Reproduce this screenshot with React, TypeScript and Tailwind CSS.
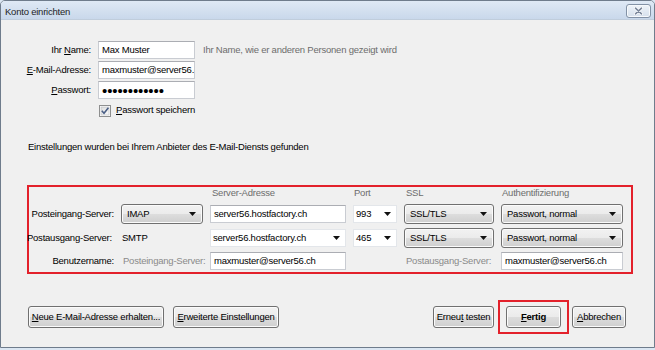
import React from "react";

function Arrow() {
  return (
    <svg width="7" height="4" viewBox="0 0 7 4" className="shrink-0">
      <path d="M0 0H7L3.5 4Z" fill="#111" />
    </svg>
  );
}

function DropSelect({ value }: { value: string }) {
  return (
    <div className="h-[20px] self-center flex items-center justify-between pl-[5px] pr-[6px] border border-[#707070] rounded-[3px] bg-[linear-gradient(#f2f2f2,#ebebeb_50%,#dddddd_50%,#cfcfcf)] shadow-[inset_0_0_0_1px_#fbfbfb]">
      <span className="leading-none">{value}</span>
      <Arrow />
    </div>
  );
}

function EditCombo({ value }: { value: string }) {
  return (
    <div className="h-[18px] self-center flex items-center justify-between pl-[2px] pr-[5px] border border-[#e3e6ea] bg-white">
      <span className="leading-none">{value}</span>
      <Arrow />
    </div>
  );
}

function TextBox({ value, className = "" }: { value: string; className?: string }) {
  return (
    <div
      className={
        "h-[18px] self-center flex items-center px-[3px] border border-[#c9ccd2] border-t-[#abadb3] bg-white overflow-hidden " +
        className
      }
    >
      <span className="leading-none">{value}</span>
    </div>
  );
}

function Button({
  children,
  w,
  bold = false,
}: {
  children: React.ReactNode;
  w: string;
  bold?: boolean;
}) {
  return (
    <div
      className={
        "h-[22px] flex items-center justify-center border border-[#707070] rounded-[3px] bg-[linear-gradient(#f2f2f2,#ebebeb_50%,#dddddd_50%,#cfcfcf)] shadow-[inset_0_0_0_1px_#fbfbfb] " +
        w +
        (bold ? " font-bold" : "")
      }
    >
      {children}
    </div>
  );
}

function U({ children }: { children: React.ReactNode }) {
  return <span className="underline underline-offset-[1px]">{children}</span>;
}

function CheckBox() {
  return (
    <svg width="12" height="12" viewBox="0 0 12 12" className="shrink-0">
      <defs>
        <linearGradient id="cb" x1="0" y1="0" x2="1" y2="1">
          <stop offset="0" stopColor="#dcdcdc" />
          <stop offset="1" stopColor="#fbfbfb" />
        </linearGradient>
      </defs>
      <rect x="0.5" y="0.5" width="11" height="11" fill="#fff" stroke="#8e8f8f" />
      <rect x="2" y="2" width="8" height="8" fill="url(#cb)" stroke="#b9bcc0" strokeWidth="0.6" />
      <path d="M2.8 5.8 L5 8.2 L9.4 2.8" fill="none" stroke="#4a5f86" strokeWidth="1.6" />
    </svg>
  );
}

function CloseIcon() {
  return (
    <div className="w-[25px] h-[14px] mt-[3px] flex items-center justify-center border border-[#8392a6] rounded-[3px] bg-[linear-gradient(#eef3f9,#d6e0ec)] shadow-[inset_0_0_0_1px_#f6f9fc]">
      <svg width="9" height="8" viewBox="0 0 9 8">
        <path d="M1.5 1.2 L7.5 6.8 M7.5 1.2 L1.5 6.8" stroke="#ffffff" strokeWidth="3" strokeLinecap="round" />
        <path d="M1.5 1.2 L7.5 6.8 M7.5 1.2 L1.5 6.8" stroke="#7c889c" strokeWidth="1.6" strokeLinecap="round" />
      </svg>
    </div>
  );
}

export default function App() {
  return (
    <div className="w-[655px] h-[350px] bg-[#dbe6f2] font-['Liberation_Sans',Arial,sans-serif] text-[9.5px] tracking-[-0.22px] text-black whitespace-nowrap">
      <div className="w-[655px] h-[348px] border border-[#6f7c8c] rounded-t-[5px] overflow-hidden flex flex-col bg-[#f0f0f0]">
        {/* Title bar */}
        <div className="h-[19px] shrink-0 flex items-start justify-between pl-[4px] pr-[3px] bg-[linear-gradient(#dfe9f5,#c9d8eb)] border-b border-[#c0cddc]">
          <span className="mt-[4px] text-[#1e1e1e]">Konto einrichten</span>
          <CloseIcon />
        </div>

        {/* Body */}
        <div className="flex flex-col flex-1">
          {/* Top form */}
          <div className="mt-[21px] flex flex-col gap-[2px]">
            <div className="flex items-center h-[18px]">
              <span className="w-[90px] text-right">
                Ihr <U>N</U>ame:
              </span>
              <TextBox value="Max Muster" className="ml-[7px] w-[97px]" />
              <span className="ml-[8px] text-[#6d6d6d]">Ihr Name, wie er anderen Personen gezeigt wird</span>
            </div>
            <div className="flex items-center h-[18px]">
              <span className="w-[90px] text-right">
                <U>E</U>-Mail-Adresse:
              </span>
              <TextBox value="maxmuster@server56.ch" className="ml-[7px] w-[97px]" />
            </div>
            <div className="flex items-center h-[18px]">
              <span className="w-[90px] text-right">
                <U>P</U>asswort:
              </span>
              <div className="ml-[7px] w-[97px] h-[18px] flex items-center px-[3px] border border-[#c9ccd2] border-t-[#abadb3] bg-white overflow-hidden">
                <span className="text-[15px] leading-none tracking-[-0.1px]">••••••••••••</span>
              </div>
            </div>
            <div className="flex items-center h-[13px] mt-[3px] pl-[98px]">
              <CheckBox />
              <span className="ml-[5px]">
                <U>P</U>asswort speichern
              </span>
            </div>
          </div>

          <div className="mt-[24px] ml-[27px] h-[12px] flex items-center">
            Einstellungen wurden bei Ihrem Anbieter des E-Mail-Diensts gefunden
          </div>

          {/* Red box with server settings */}
          <div className="mt-[32px] ml-[26px] w-[606px] h-[89px] border-2 border-[#e3212b] pb-[2px]">
            <div className="grid grid-cols-[85px_82px_136px_44px_90px_122px] grid-rows-[13px_20px_20px_18px] gap-x-[7px] gap-y-[4px]">
              {/* header */}
              <div />
              <div />
              <div className="pl-[2px] text-[#6d6d6d] flex items-center">Server-Adresse</div>
              <div className="pl-[1px] text-[#6d6d6d] flex items-center">Port</div>
              <div className="pl-[2px] text-[#6d6d6d] flex items-center">SSL</div>
              <div className="pl-[1px] text-[#6d6d6d] flex items-center">Authentifizierung</div>

              {/* row 1 */}
              <div className="flex items-center justify-end">Posteingang-Server:</div>
              <DropSelect value="IMAP" />
              <TextBox value="server56.hostfactory.ch" />
              <EditCombo value="993" />
              <DropSelect value="SSL/TLS" />
              <DropSelect value="Passwort, normal" />

              {/* row 2 */}
              <div className="flex items-center justify-end pr-[2px]">Postausgang-Server:</div>
              <div className="flex items-center pl-[1px]">SMTP</div>
              <EditCombo value="server56.hostfactory.ch" />
              <EditCombo value="465" />
              <DropSelect value="SSL/TLS" />
              <DropSelect value="Passwort, normal" />

              {/* row 3 */}
              <div className="flex items-center justify-end">Benutzername:</div>
              <div className="flex items-center pl-[2px] text-[#8a8a8a]">Posteingang-Server:</div>
              <TextBox value="maxmuster@server56.ch" />
              <div />
              <div className="flex items-center pl-[2px] text-[#8a8a8a]">Postausgang-Server:</div>
              <TextBox value="maxmuster@server56.ch" />
            </div>
          </div>

          {/* Bottom buttons */}
          <div className="mt-[26px] flex items-center h-[34px] pl-[27px] pr-[28px]">
            <Button w="w-[136px]">
              <span>
                <U>N</U>eue E-Mail-Adresse erhalten...
              </span>
            </Button>
            <div className="ml-[9px]">
              <Button w="w-[106px]">
                <span>
                  <U>E</U>rweiterte Einstellungen
                </span>
              </Button>
            </div>
            <div className="flex-1" />
            <Button w="w-[61px]">
              <span>
                Erneu<U>t</U> testen
              </span>
            </Button>
            <div className="ml-[4px] h-[34px] w-[71px] border-2 border-[#e3212b] flex items-center justify-center">
              <Button w="w-[55px]" bold>
                <span>
                  <U>F</U>ertig
                </span>
              </Button>
            </div>
            <div className="ml-[3px]">
              <Button w="w-[54px]">
                <span>
                  <U>A</U>bbrechen
                </span>
              </Button>
            </div>
          </div>
        </div>
      </div>
    </div>
  );
}
